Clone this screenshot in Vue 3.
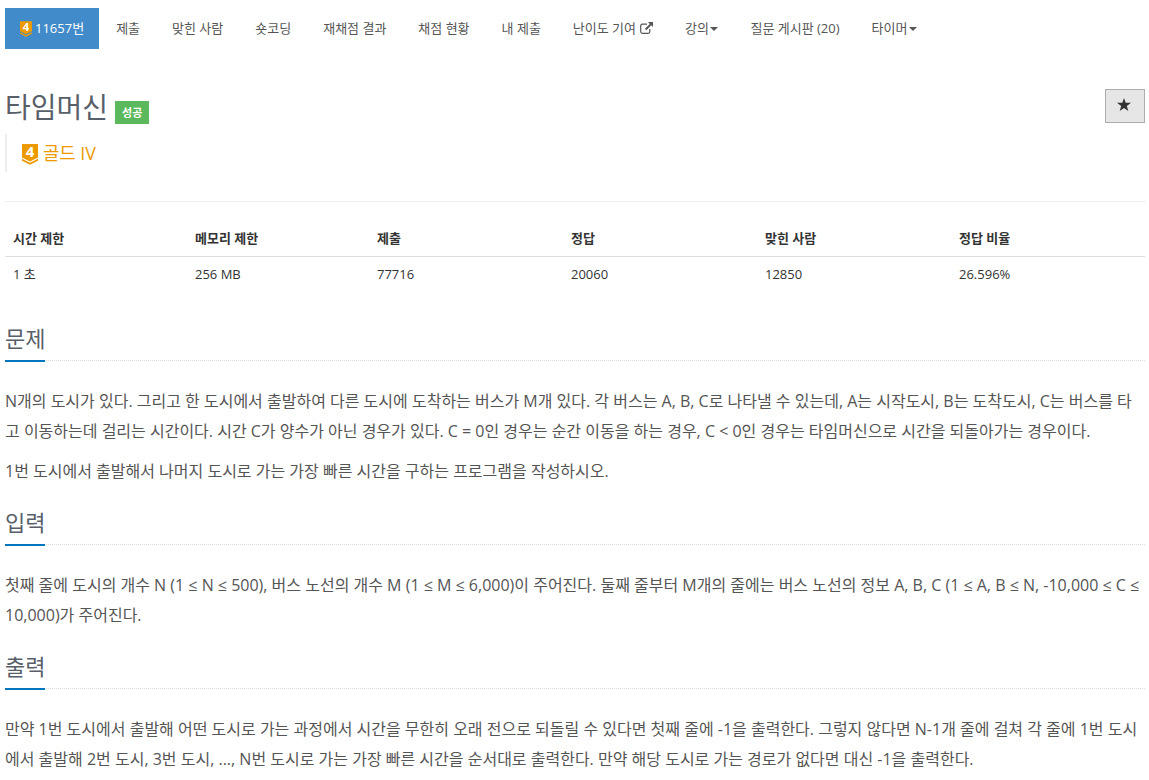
<template>
  <div class="page">
    <ul class="problem-menu">
      <li v-for="item in menu" :key="item.label" :class="{ active: item.active }">
        <a href="#">
          <svg v-if="item.active" class="tier-small" viewBox="0 0 16 21">
            <path d="M0 0H16V13.5L8 17.5L0 13.5Z" fill="#ec9a00" />
            <path d="M0 14.8L8 18.8L16 14.8V16.8L8 20.8L0 16.8Z" fill="#ec9a00" />
            <text x="8" y="13.4" text-anchor="middle">4</text>
          </svg>
          <span>{{ item.label }}</span>
          <svg v-if="item.external" class="external" viewBox="0 0 13 12">
            <path d="M7 2.2H2.5Q0.7 2.2 0.7 4V9.6Q0.7 11.4 2.5 11.4H8Q9.8 11.4 9.8 9.6V7" fill="none" stroke="currentColor" stroke-width="1.2" />
            <path d="M8 0H13V5L11.2 3.3L6.3 8.2L4.9 6.8L9.8 1.9Z" fill="currentColor" />
          </svg>
          <b v-if="item.caret" class="caret"></b>
        </a>
      </li>
    </ul>

    <div class="page-header">
      <div>
        <h1><span>타임머신</span><span class="badge">성공</span></h1>
        <blockquote>
          <svg class="tier" viewBox="0 0 16 21">
            <path d="M0 0H16V13.5L8 17.5L0 13.5Z" fill="#ec9a00" />
            <path d="M0 14.8L8 18.8L16 14.8V16.8L8 20.8L0 16.8Z" fill="#ec9a00" />
            <text x="8" y="13.4" text-anchor="middle">4</text>
          </svg>
          <span class="tier-name">골드 IV</span>
        </blockquote>
      </div>
      <button class="favorite">
        <svg viewBox="0 0 14 13"><path d="M7 0L8.7 4.7H14L9.8 7.9L11.3 13L7 10L2.7 13L4.2 7.9L0 4.7H5.3Z" fill="#333" /></svg>
      </button>
    </div>

    <table class="info">
      <thead>
        <tr><th v-for="col in info" :key="col.name" :style="{ width: col.width + 'px' }">{{ col.name }}</th></tr>
      </thead>
      <tbody>
        <tr><td v-for="col in info" :key="col.name">{{ col.value }}</td></tr>
      </tbody>
    </table>

    <section v-for="section in sections" :key="section.title">
      <div class="headline"><h2>{{ section.title }}</h2></div>
      <p v-for="text in section.paragraphs" :key="text">{{ text }}</p>
    </section>
  </div>
</template>

<script setup>
const menu = [
  { label: '11657번', active: true },
  { label: '제출' },
  { label: '맞힌 사람' },
  { label: '숏코딩' },
  { label: '재채점 결과' },
  { label: '채점 현황' },
  { label: '내 제출' },
  { label: '난이도 기여', external: true },
  { label: '강의', caret: true },
  { label: '질문 게시판 (20)' },
  { label: '타이머', caret: true },
]

const info = [
  { name: '시간 제한', value: '1 초', width: 182 },
  { name: '메모리 제한', value: '256 MB', width: 182 },
  { name: '제출', value: '77716', width: 194 },
  { name: '정답', value: '20060', width: 194 },
  { name: '맞힌 사람', value: '12850', width: 194 },
  { name: '정답 비율', value: '26.596%', width: 194 },
]

const sections = [
  {
    title: '문제',
    paragraphs: [
      'N개의 도시가 있다. 그리고 한 도시에서 출발하여 다른 도시에 도착하는 버스가 M개 있다. 각 버스는 A, B, C로 나타낼 수 있는데, A는 시작도시, B는 도착도시, C는 버스를 타고 이동하는데 걸리는 시간이다. 시간 C가 양수가 아닌 경우가 있다. C = 0인 경우는 순간 이동을 하는 경우, C < 0인 경우는 타임머신으로 시간을 되돌아가는 경우이다.',
      '1번 도시에서 출발해서 나머지 도시로 가는 가장 빠른 시간을 구하는 프로그램을 작성하시오.',
    ],
  },
  {
    title: '입력',
    paragraphs: [
      '첫째 줄에 도시의 개수 N (1 ≤ N ≤ 500), 버스 노선의 개수 M (1 ≤ M ≤ 6,000)이 주어진다. 둘째 줄부터 M개의 줄에는 버스 노선의 정보 A, B, C (1 ≤ A, B ≤ N, -10,000 ≤ C ≤ 10,000)가 주어진다.',
    ],
  },
  {
    title: '출력',
    paragraphs: [
      '만약 1번 도시에서 출발해 어떤 도시로 가는 과정에서 시간을 무한히 오래 전으로 되돌릴 수 있다면 첫째 줄에 -1을 출력한다. 그렇지 않다면 N-1개 줄에 걸쳐 각 줄에 1번 도시에서 출발해 2번 도시, 3번 도시, ..., N번 도시로 가는 가장 빠른 시간을 순서대로 출력한다. 만약 해당 도시로 가는 경로가 없다면 대신 -1을 출력한다.',
    ],
  },
]
</script>

<style>
body { background: #fff; overflow: hidden; }
</style>

<style scoped>
.page { box-sizing: border-box; width: 1149px; height: 780px; overflow: hidden; padding: 8px 4px 0 5px; font-family: "Open Sans", "Noto Sans CJK KR", sans-serif; font-size: 13px; line-height: 1.43; color: #333; }
.problem-menu { display: flex; gap: 2px; list-style: none; margin: 0; padding: 0; height: 41px; }
.problem-menu a { display: flex; align-items: center; box-sizing: border-box; height: 41px; padding: 0 15px; color: #555; text-decoration: none; white-space: nowrap; }
.problem-menu .active a { background: #428bca; color: #fff; }
.tier-small { width: 12px; height: 16px; margin: 1px 3px 0 0; overflow: visible; }
.tier-small text, .tier text { font-size: 15px; line-height: 1; font-weight: 700; fill: #fff; }
.external { width: 13px; height: 12px; margin: 0 0 2px 4px; }
.caret { margin-left: 1.5px; border-top: 4px solid #555; border-left: 4px solid transparent; border-right: 4px solid transparent; }
.page-header { display: flex; justify-content: space-between; align-items: flex-start; box-sizing: border-box; height: 153px; padding-top: 40px; border-bottom: 1px solid #eee; }
h1 { display: flex; margin: 0; height: 37px; font-size: 28px; line-height: 37px; font-weight: 400; color: #585f69; }
.badge { height: 23px; margin: 12px 0 0 7px; padding: 0 7px; background: #5cb85c; color: #fff; font-size: 11px; line-height: 23px; font-weight: 700; }
blockquote { display: flex; align-items: center; margin: 8px 0 0; padding-left: 15px; height: 38px; border-left: 2px solid #eee; color: #ec9a00; font-size: 17.8px; }
.tier { width: 16px; height: 21px; margin: 2px 5px 0 0; overflow: visible; }
.tier-name { padding-top: 1px; }
.favorite { display: flex; align-items: center; justify-content: center; width: 40px; height: 34px; padding: 0 2px 3px 0; border: 1px solid #adadad; background: #e6e6e6; }
.favorite svg { width: 14px; height: 13px; }
.info { width: 1140px; margin: 20px 0 31px; table-layout: fixed; border-collapse: separate; border-spacing: 0; }
.info th, .info td { box-sizing: border-box; padding: 8px; text-align: left; line-height: 18px; }
.info th { padding: 7px 8px 9px; border-bottom: 1px solid #ddd; font-weight: 700; }
.headline { margin: 20px 0 25px; height: 38px; border-bottom: 1px dotted #d9dfe8; }
h2 { display: inline-block; margin: 0; height: 38px; border-bottom: 2px solid #0076c0; font-size: 22px; line-height: 33px; font-weight: 400; color: #585f69; }
p { margin: 0 0 10px; font-size: 16px; line-height: 30px; color: #555; }
</style>
